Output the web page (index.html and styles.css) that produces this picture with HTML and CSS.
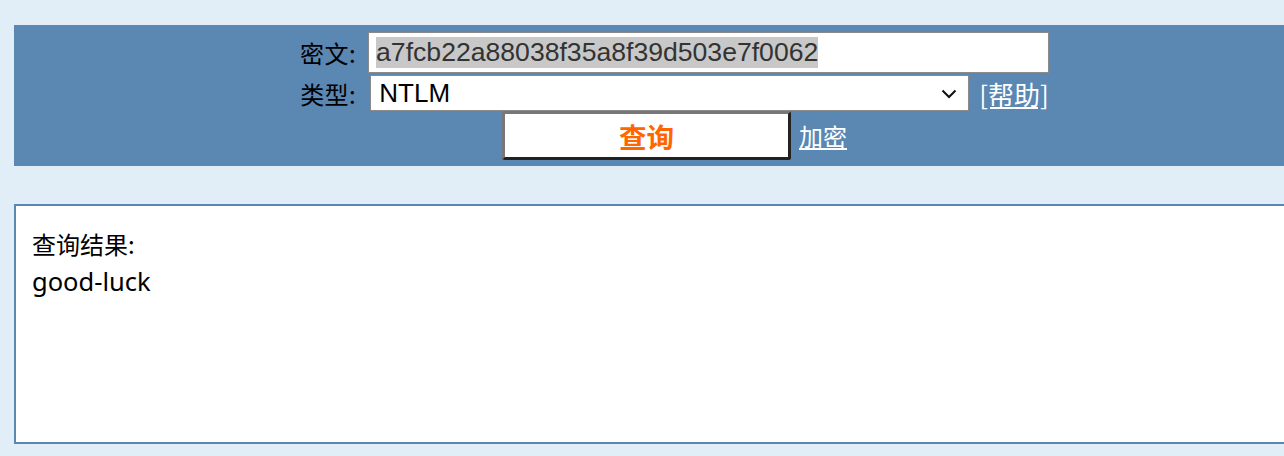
FILE: index.html
```html
<!DOCTYPE html>
<html lang="zh-CN">
<head>
<meta charset="utf-8">
<title>查询</title>
<link rel="stylesheet" href="styles.css">
</head>
<body>
<div class="page">
  <form class="panel" onsubmit="return false">
    <div class="row row-cipher">
      <label class="label" for="cipher">密文:</label>
      <input id="cipher" class="field" type="text" value="a7fcb22a88038f35a8f39d503e7f0062">
    </div>
    <div class="row row-type">
      <label class="label" for="type">类型:</label>
      <span class="select-wrap">
        <select id="type" class="select">
          <option>NTLM</option>
        </select>
        <svg class="chevron" width="16" height="10" viewBox="0 0 16 10"><path d="M1.5 1.5 L8 8 L14.5 1.5" fill="none" stroke="#111" stroke-width="2"/></svg>
      </span>
      <a class="link help" href="#">[帮助]</a>
    </div>
    <div class="row row-submit">
      <button class="btn" type="submit">查询</button>
      <a class="link enc" href="#">加密</a>
    </div>
  </form>
  <div class="result">
    <div class="result-title">查询结果:</div>
    <div class="result-value">good-luck</div>
  </div>
</div>
<script src="script.js"></script>
</body>
</html>
```
FILE: styles.css
```css
html, body {
  margin: 0;
  padding: 0;
  background: #e1eef7;
  overflow: hidden;
}
.page {
  padding: 25px 0 0 14px;
  width: 1321px;
}
.panel {
  background: #5b87b3;
  display: flex;
  flex-direction: column;
  align-items: center;
  padding: 7px 0 6px;
  margin: 0;
}
.row {
  display: flex;
  align-items: center;
}
.row-cipher { height: 41px; }
.row-type { height: 36px; margin-top: 2px; }
.row-submit { height: 49px; }
.label {
  font-family: "Noto Sans CJK SC", sans-serif;
  font-size: 24px;
  color: #000;
  margin-right: 12px;
  letter-spacing: 0.5px;
}
.field {
  box-sizing: border-box;
  width: 681px;
  height: 41px;
  border: 1px solid #8a8a8a;
  padding: 0 7px;
  font-family: "Liberation Sans", Arial, sans-serif;
  font-size: 26.6px;
  color: #333;
  background: #fff;
  outline: none;
  margin: 0;
}
.field::selection {
  background: #c8c8c8;
  color: #333;
}
.select-wrap {
  position: relative;
  display: block;
  margin-left: 2px;
}
.select {
  appearance: none;
  -webkit-appearance: none;
  box-sizing: border-box;
  width: 599px;
  height: 36px;
  border: 1px solid #8a8a8a;
  border-radius: 0;
  background: #fff;
  padding: 0 8px;
  font-family: "Liberation Sans", Arial, sans-serif;
  font-size: 26px;
  color: #000;
  margin: 0;
  display: block;
}
.chevron {
  position: absolute;
  right: 12px;
  top: 14px;
  pointer-events: none;
}
.link {
  color: #fff;
  text-decoration: underline;
  font-family: "Noto Sans CJK SC", sans-serif;
}
.help {
  font-size: 26px;
  margin-left: 10px;
}
.btn {
  box-sizing: border-box;
  width: 289px;
  height: 49px;
  background: #fff;
  border: 3px solid;
  border-color: #777 #222 #222 #777;
  border-radius: 3px;
  font-family: "Noto Sans CJK SC", sans-serif;
  font-weight: bold;
  font-size: 27.5px;
  color: #ff6600;
  padding: 0;
  margin: 0;
}
.enc {
  font-size: 24px;
  margin-left: 8px;
}
.result {
  box-sizing: border-box;
  margin-top: 38px;
  height: 240px;
  background: #fff;
  border: 2px solid #5b87b3;
  padding: 19px 16px;
  font-family: "Noto Sans CJK SC", sans-serif;
  color: #000;
}
.result-title {
  font-size: 24px;
  line-height: 38px;
}
.result-value {
  font-family: "Noto Sans", "Noto Sans CJK SC", sans-serif;
  font-size: 25.5px;
  line-height: 37px;
}
```
FILE: script.js
```js
var f = document.getElementById('cipher');
f.focus();
f.select();
```
